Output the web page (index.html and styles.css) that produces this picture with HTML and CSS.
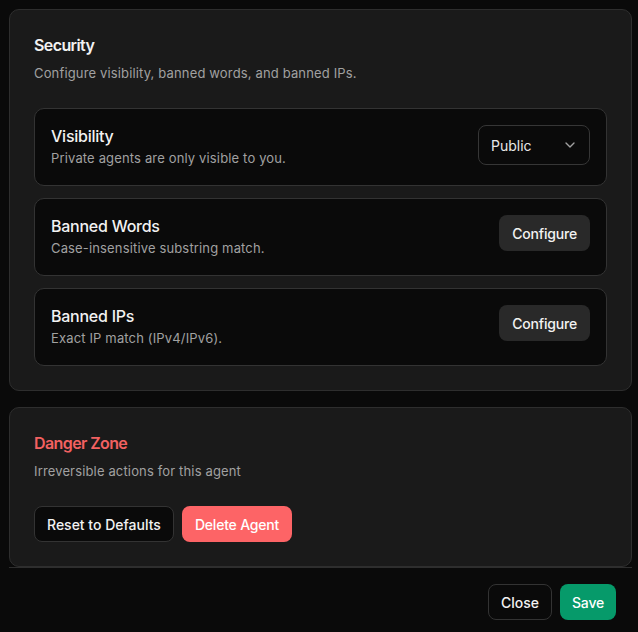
FILE: index.html
```html
<!DOCTYPE html>
<html lang="en">
<head>
<meta charset="utf-8">
<title>Agent Settings</title>
<link rel="stylesheet" href="styles.css">
</head>
<body>
<div class="dialog">
  <div class="scroll">
    <section class="card">
      <h2 class="card-title">Security</h2>
      <p class="card-desc">Configure visibility, banned words, and banned IPs.</p>
      <div class="items">
        <div class="item">
          <div class="item-text">
            <div class="item-title">Visibility</div>
            <div class="item-sub">Private agents are only visible to you.</div>
          </div>
          <button class="select" type="button">
            <span>Public</span>
            <svg class="chev" width="16" height="16" viewBox="0 0 24 24" fill="none" stroke="currentColor" stroke-width="2" stroke-linecap="round" stroke-linejoin="round"><path d="m6 9 6 6 6-6"/></svg>
          </button>
        </div>
        <div class="item">
          <div class="item-text">
            <div class="item-title">Banned Words</div>
            <div class="item-sub">Case-insensitive substring match.</div>
          </div>
          <button class="btn btn-secondary" type="button">Configure</button>
        </div>
        <div class="item">
          <div class="item-text">
            <div class="item-title">Banned IPs</div>
            <div class="item-sub">Exact IP match (IPv4/IPv6).</div>
          </div>
          <button class="btn btn-secondary" type="button">Configure</button>
        </div>
      </div>
    </section>
    <section class="card">
      <h2 class="card-title danger">Danger Zone</h2>
      <p class="card-desc">Irreversible actions for this agent</p>
      <div class="actions">
        <button class="btn btn-outline" type="button">Reset to Defaults</button>
        <button class="btn btn-danger" type="button">Delete Agent</button>
      </div>
    </section>
  </div>
  <div class="footer">
    <button class="btn btn-outline" type="button">Close</button>
    <button class="btn btn-primary" type="button">Save</button>
  </div>
</div>
</body>
</html>
```

FILE: styles.css
```css
* { box-sizing: border-box; }
html, body {
  margin: 0;
  padding: 0;
  background: #0a0a0a;
  font-family: Inter, "Noto Sans", sans-serif;
  color: #ededed;
}
.dialog {
  width: 638px;
  height: 632px;
  display: flex;
  flex-direction: column;
}
.scroll {
  padding: 9px 6px 0 9px;
  display: flex;
  flex-direction: column;
  gap: 16px;
}
.card {
  background: #1a1a1a;
  border: 1px solid #2e2e2e;
  border-radius: 10px;
  padding: 24px;
}
.card-title {
  margin: 0;
  font-size: 16px;
  line-height: 22px;
  font-weight: 600;
  letter-spacing: -0.6px;
  color: #f2f2f2;
}
.card-title.danger { color: #f26161; }
.card-desc {
  margin: 7px 0 0;
  font-size: 13px;
  line-height: 20px;
  letter-spacing: 0.15px;
  color: #a1a1a1;
}
.items {
  margin-top: 25px;
  display: flex;
  flex-direction: column;
  gap: 12px;
}
.item {
  height: 78px;
  background: #0a0a0a;
  border: 1px solid #333;
  border-radius: 10px;
  padding: 16px;
  display: flex;
  align-items: flex-start;
  justify-content: space-between;
}
.item-title {
  font-size: 16px;
  line-height: 22px;
  font-weight: 500;
  letter-spacing: -0.25px;
  color: #f2f2f2;
}
.item-sub {
  margin-top: 1px;
  font-size: 13px;
  line-height: 21px;
  letter-spacing: 0.15px;
  color: #a1a1a1;
}
.select {
  width: 112px;
  height: 40px;
  background: #0a0a0a;
  border: 1px solid #363636;
  border-radius: 8px;
  padding: 0 11px 0 12px;
  display: flex;
  align-items: center;
  justify-content: space-between;
  font-family: inherit;
  font-size: 14px;
  color: #e8e8e8;
}
.chev { color: #a1a1a1; }
.btn {
  height: 36px;
  border-radius: 8px;
  padding: 0 12px;
  font-family: inherit;
  font-size: 14px;
  font-weight: 500;
  border: 1px solid transparent;
  color: #f2f2f2;
  white-space: nowrap;
}
.btn-secondary { background: #292929; letter-spacing: -0.2px; }
.btn-outline { background: #0a0a0a; border-color: #333; }
.btn-danger { background: #fd6466; color: #fff; letter-spacing: -0.2px; }
.btn-primary { background: #069a6a; color: #fff; letter-spacing: -0.2px; padding: 0 11px; }
.actions {
  margin-top: 25px;
  display: flex;
  gap: 8px;
}
.footer {
  margin: 0 6px 0 9px;
  border-top: 1px solid #2e2e2e;
  padding: 16px 16px 12px 0;
  display: flex;
  justify-content: flex-end;
  gap: 8px;
}
```
